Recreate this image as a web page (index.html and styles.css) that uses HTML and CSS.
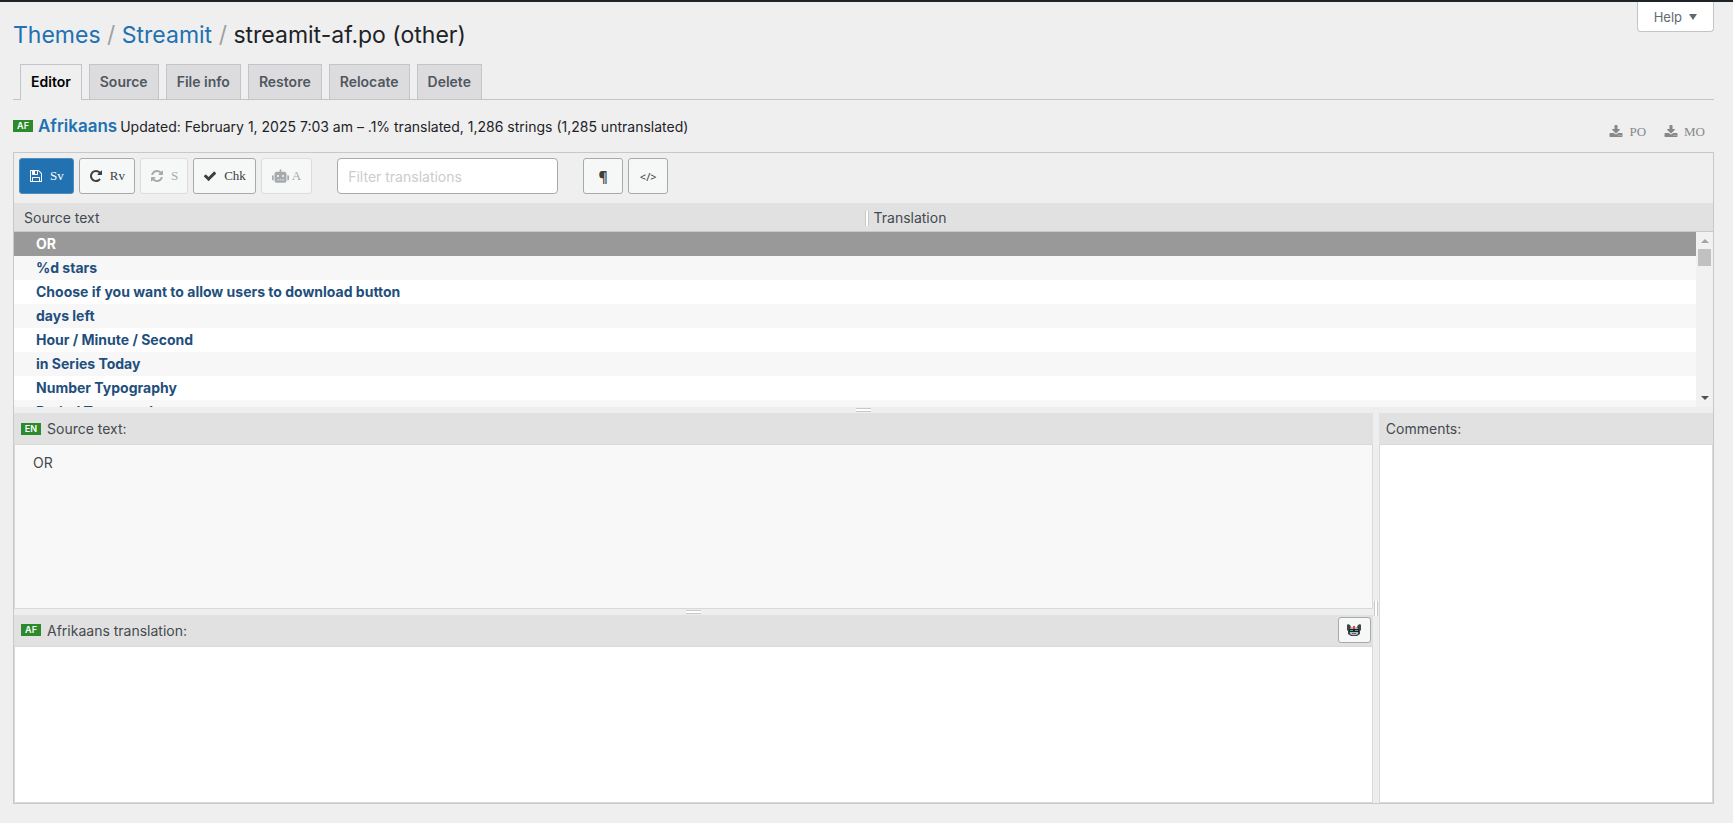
FILE: index.html
```html
<!DOCTYPE html>
<html lang="en">
<head>
  <meta charset="UTF-8" />
  <meta name="viewport" content="width=device-width, initial-scale=1.0"/>
  <title>streamit-af.po - Editor</title>
  <link rel="stylesheet" href="styles.css">
</head>
<body>

  <!-- Header -->
  <header class="page-header">
    <h1 class="breadcrumb">
      <a href="#">Themes</a> <span class="sep">/</span>
      <a href="#">Streamit</a> <span class="sep">/</span>
      streamit-af.po (other)
    </h1>
    <button class="help-btn" type="button">Help <span class="arrow"></span></button>
  </header>

  <nav class="tabs">
    <a class="tab active" href="#">Editor</a>
    <a class="tab" href="#">Source</a>
    <a class="tab" href="#">File info</a>
    <a class="tab" href="#">Restore</a>
    <a class="tab" href="#">Relocate</a>
    <a class="tab" href="#">Delete</a>
  </nav>

  <!-- File status -->
  <div class="status">
    <span class="lang">AF</span>
    <strong class="locale">Afrikaans</strong>
    <span class="updated">Updated: February 1, 2025 7:03 am – .1% translated, 1,286 strings (1,285 untranslated)</span>
    <div class="downloads">
      <a href="#"><svg class="icon" viewBox="0 0 1792 1792"><path d="M1344 1344q0-26-19-45t-45-19-45 19-19 45 19 45 45 19 45-19 19-45zm256 0q0-26-19-45t-45-19-45 19-19 45 19 45 45 19 45-19 19-45zm128-224v320q0 40-28 68t-68 28h-1472q-40 0-68-28t-28-68v-320q0-40 28-68t68-28h465l135 136q58 56 136 56t136-56l136-136h464q40 0 68 28t28 68zm-325-569q17 41-14 70l-448 448q-18 19-45 19t-45-19l-448-448q-31-29-14-70 17-39 59-39h256v-448q0-26 19-45t45-19h256q26 0 45 19t19 45v448h256q42 0 59 39z"/></svg>PO</a>
      <a href="#"><svg class="icon" viewBox="0 0 1792 1792"><path d="M1344 1344q0-26-19-45t-45-19-45 19-19 45 19 45 45 19 45-19 19-45zm256 0q0-26-19-45t-45-19-45 19-19 45 19 45 45 19 45-19 19-45zm128-224v320q0 40-28 68t-68 28h-1472q-40 0-68-28t-28-68v-320q0-40 28-68t68-28h465l135 136q58 56 136 56t136-56l136-136h464q40 0 68 28t28 68zm-325-569q17 41-14 70l-448 448q-18 19-45 19t-45-19l-448-448q-31-29-14-70 17-39 59-39h256v-448q0-26 19-45t45-19h256q26 0 45 19t19 45v448h256q42 0 59 39z"/></svg>MO</a>
    </div>
  </div>

  <!-- Editor -->
  <main class="editor">
    <div class="toolbar">
      <button class="btn btn-primary" type="button"><svg class="icon" viewBox="0 0 1792 1792"><path d="M512 1536h768v-384h-768v384zm896 0h128v-896q0-14-10-38.500t-20-34.500l-281-281q-10-10-34-20t-39-10v416q0 40-28 68t-68 28h-576q-40 0-68-28t-28-68v-416h-128v1280h128v-416q0-40 28-68t68-28h832q40 0 68 28t28 68v416zm-384-928v-320q0-13-9.500-22.500t-22.500-9.500h-192q-13 0-22.500 9.500t-9.500 22.500v320q0 13 9.500 22.500t22.500 9.500h192q13 0 22.500-9.500t9.500-22.500zm640 32v928q0 40-28 68t-68 28h-1344q-40 0-68-28t-28-68v-1344q0-40 28-68t68-28h928q40 0 88 20t76 48l280 280q28 28 48 76t20 88z"/></svg>Sv</button>
      <button class="btn" type="button"><svg class="icon" viewBox="0 0 1792 1792"><path d="M1664 256v448q0 26-19 45t-45 19h-448q-42 0-59-40-17-39 14-69l138-138q-148-137-349-137-104 0-198.500 40.500t-163.500 109.500-109.500 163.500-40.500 198.500 40.500 198.500 109.500 163.500 163.500 109.500 198.500 40.500q119 0 225-52t179-147q7-10 23-12 15 0 25 9l137 138q9 8 9.500 20.500t-7.500 22.500q-109 132-264 204.500t-327 72.500q-156 0-298-61t-245-164-164-245-61-298 61-298 164-245 245-164 298-61q147 0 284.500 55.500t244.500 156.500l130-129q29-31 70-14 39 17 39 59z"/></svg>Rv</button>
      <button class="btn" type="button" disabled><svg class="icon" viewBox="0 0 1792 1792"><path d="M1639 1056q0 5-1 7-64 268-268 434.500t-478 166.500q-146 0-282.500-55t-243.500-157l-129 129q-19 19-45 19t-45-19-19-45v-448q0-26 19-45t45-19h448q26 0 45 19t19 45-19 45l-137 137q71 66 161 102t187 36q134 0 250-65t186-179q11-17 53-117 8-23 30-23h192q13 0 22.500 9.500t9.500 22.500zm25-800v448q0 26-19 45t-45 19h-448q-26 0-45-19t-19-45 19-45l138-138q-148-137-349-137-134 0-250 65t-186 179q-11 17-53 117-8 23-30 23h-199q-13 0-22.500-9.500t-9.500-22.500v-7q65-268 270-434.500t480-166.500q146 0 284 55.500t245 156.500l130-129q19-19 45-19t45 19 19 45z"/></svg>S</button>
      <button class="btn" type="button"><svg class="icon" viewBox="0 0 1792 1792"><path d="M1671 566q0 40-28 68l-724 724-136 136q-28 28-68 28t-68-28l-136-136-362-362q-28-28-28-68t28-68l136-136q28-28 68-28t68 28l294 295 656-657q28-28 68-28t68 28l136 136q28 28 28 68z"/></svg>Chk</button>
      <button class="btn btn-auto" type="button" disabled><svg class="icon icon-robot" viewBox="0 0 640 512"><path d="M32,224H64V416H32A31.960,31.960,0,0,1,0,384V256A31.960,31.960,0,0,1,32,224Zm512-48V448a64.060,64.060,0,0,1-64,64H160a64.060,64.060,0,0,1-64-64V176a79.970,79.970,0,0,1,80-80H288V32a32,32,0,0,1,64,0V96H464A79.970,79.970,0,0,1,544,176ZM264,256a40,40,0,1,0-40,40A40,40,0,0,0,264,256Zm-8,128H192v32h64Zm96,0H288v32h64ZM456,256a40,40,0,1,0-40,40A40,40,0,0,0,456,256Zm-8,128H384v32h64ZM640,256V384a31.960,31.960,0,0,1-32,32H576V224h32A31.960,31.960,0,0,1,640,256Z"/></svg>A</button>
      <input class="filter" type="text" placeholder="Filter translations" aria-label="Filter translations">
      <button class="btn btn-square pilcrow" type="button">¶</button>
      <button class="btn btn-square code" type="button">&lt;/&gt;</button>
    </div>

    <div class="list">
      <table class="strings">
        <thead>
          <tr><th>Source text</th><th class="split-col"><span class="grip grip-v"></span>Translation</th></tr>
        </thead>
        <tbody>
          <tr class="selected"><td>OR</td><td></td></tr>
          <tr><td>%d stars</td><td></td></tr>
          <tr><td>Choose if you want to allow users to download button</td><td></td></tr>
          <tr><td>days left</td><td></td></tr>
          <tr><td>Hour / Minute / Second</td><td></td></tr>
          <tr><td>in Series Today</td><td></td></tr>
          <tr><td>Number Typography</td><td></td></tr>
          <tr><td>Period Typography</td><td></td></tr>
        </tbody>
      </table>
      <div class="scrollbar">
        <span class="scroll-up"></span>
        <span class="scroll-thumb"></span>
        <span class="scroll-down"></span>
      </div>
    </div>

    <div class="splitter"><span class="grip"></span></div>

    <div class="panes">
      <div class="left">
        <section class="pane pane-source">
          <h2 class="pane-title"><span class="lang">EN</span>Source text:</h2>
          <div class="pane-body source">OR</div>
        </section>
        <div class="splitter"><span class="grip"></span></div>
        <section class="pane pane-target">
          <div class="pane-title">
            <span class="lang">AF</span><label for="translation">Afrikaans translation:</label>
            <button class="btn btn-bot" type="button" aria-label="Suggest translations">
              <svg viewBox="0 0 14 14">
                <path fill="#444" d="M1 1l2 1 1 2h6l1-2 2-1 1 1v5l-1 1v3l-3 2H4l-3-2V8L0 7V2z"/>
                <path fill="#b8bcbe" d="M4 4h6l1 2H3zM3 9h8v2l-2 1H5l-2-1z"/>
                <path fill="#222" d="M2 6h10v3H2z"/>
                <path fill="#23b5e8" d="M3 7h3v1H3zM8 7h3v1H8z"/>
                <path fill="#e8452c" d="M6 3h2v3H6z"/>
                <path fill="#666" d="M5 10h4v1H5z"/>
              </svg>
            </button>
          </div>
          <textarea class="pane-body" id="translation"></textarea>
        </section>
      </div>
      <div class="splitter-v"><span class="grip grip-v"></span></div>
      <section class="pane">
        <div class="pane-title"><label for="comments">Comments:</label></div>
        <textarea class="pane-body" id="comments"></textarea>
      </section>
    </div>
  </main>

</body>
</html>
```
FILE: styles.css
```css
* {
  margin: 0;
  padding: 0;
  box-sizing: border-box;
}

body {
  background: #efefef;
  border-top: 2px solid #1d2327;
  color: #1d2327;
  font-family: Inter, sans-serif;
  font-size: 14px;
  height: 100vh;
  min-height: 600px;
  padding: 0 19px 19px 13px;
  display: flex;
  flex-direction: column;
}

a {
  color: #2271b1;
  text-decoration: none;
}

button, input, textarea {
  font-family: inherit;
}

/* Header */
.page-header {
  display: flex;
  justify-content: space-between;
  align-items: flex-start;
}

.breadcrumb {
  font-size: 23px;
  font-weight: 400;
  line-height: 30px;
  padding: 18px 0 14px;
}

.breadcrumb .sep {
  color: #a0a0a0;
}

.help-btn {
  display: flex;
  align-items: center;
  gap: 7px;
  height: 30px;
  padding: 0 16px;
  background: #fff;
  border: 1px solid #c3c4c7;
  border-top: none;
  border-radius: 0 0 4px 4px;
  color: #646970;
  font-size: 13px;
}

.help-btn .arrow {
  border: 4px solid transparent;
  border-top: 6px solid #646970;
  border-bottom: none;
}

/* Tabs */
.tabs {
  display: flex;
  gap: 7px;
  padding-left: 7px;
  border-bottom: 1px solid #c3c4c7;
}

.tab {
  padding: 5px 10px;
  border: 1px solid #c3c4c7;
  border-bottom: none;
  background: #dcdcde;
  color: #50575e;
  font-weight: 600;
  line-height: 24px;
}

.tab.active {
  margin-bottom: -1px;
  padding-bottom: 6px;
  background: #efefef;
  color: #000;
}

/* Status */
.status {
  display: flex;
  align-items: center;
  height: 52px;
}

.lang {
  width: 20px;
  background: #2b8a2b;
  color: #fff;
  font-size: 9px;
  font-weight: 600;
  line-height: 12px;
  text-align: center;
}

.locale {
  margin: 0 3px 0 5px;
  color: #2271b1;
  font-size: 17px;
  font-weight: 600;
}

.downloads {
  display: flex;
  gap: 18px;
  margin-left: auto;
  padding: 12px 9px 0 0;
}

.downloads a {
  display: flex;
  align-items: center;
  gap: 6px;
  color: #888;
  font-family: "Liberation Serif", serif;
  font-size: 13px;
}

.icon {
  width: 14px;
  height: 14px;
  fill: currentColor;
}

/* Editor */
.editor {
  flex: 1;
  min-height: 0;
  display: flex;
  flex-direction: column;
  border: 1px solid #c8c8c8;
}

.toolbar {
  display: flex;
  gap: 5px;
  padding: 5px 5px 9px;
}

.btn {
  display: flex;
  align-items: center;
  justify-content: center;
  gap: 7px;
  height: 36px;
  padding: 0 9px;
  background: #f6f7f7;
  border: 1px solid #a7a9ab;
  border-radius: 3px;
  color: #3c3f42;
  font-family: "Liberation Serif", serif;
  font-size: 13px;
}

.btn:disabled {
  border-color: #dcdcde;
  color: #a7aaad;
}

.btn-primary {
  background: #2271b1;
  border-color: #4b8cc2;
  color: #fff;
}

.btn-auto {
  gap: 3px;
  padding: 0 10px;
}

.icon-robot {
  width: 17px;
}

.btn-square {
  width: 40px;
  padding: 0;
}

.pilcrow {
  font-family: "Open Sans", sans-serif;
  font-size: 14px;
  font-weight: 700;
}

.code {
  font-family: "Noto Sans", sans-serif;
  font-size: 11px;
}

.filter {
  width: 221px;
  margin: 0 20px;
  padding: 0 10px;
  background: #fff;
  border: 1px solid #a7a9ab;
  border-radius: 4px;
  font-size: 14px;
}

.filter::placeholder {
  color: #ccc;
}

/* String list */
.list {
  flex: 204 1 0;
  min-height: 0;
  overflow: hidden;
  position: relative;
  background: #fff;
}

.strings {
  width: 100%;
  table-layout: fixed;
  border-collapse: separate;
  border-spacing: 0;
}

.strings th {
  height: 29px;
  padding: 0 10px;
  background: #e1e1e1;
  border-bottom: 1px solid #c8c8c8;
  color: #444a50;
  font-weight: 400;
  text-align: left;
}

.strings .split-col {
  padding-left: 1px;
}

.strings td {
  height: 24px;
  padding: 0 22px 2px;
  color: #1f4f7d;
  font-weight: 700;
}

.strings tbody tr:nth-child(even) {
  background: #f7f7f7;
}

.strings .selected td {
  background: #999;
  color: #fff;
}

.scrollbar {
  position: absolute;
  top: 29px;
  right: 0;
  bottom: 0;
  width: 17px;
  padding: 7px 0;
  display: flex;
  flex-direction: column;
  align-items: center;
  background: #f1f1f1;
}

.scroll-up, .scroll-down {
  border: 4px solid transparent;
}

.scroll-up {
  border-top: none;
  border-bottom-color: #a3a3a3;
}

.scroll-down {
  margin-top: auto;
  border-bottom: none;
  border-top-color: #505050;
}

.scroll-thumb {
  width: 13px;
  height: 17px;
  margin-top: 6px;
  background: #c1c1c1;
}

/* Splitters */
.splitter, .splitter-v {
  display: flex;
  align-items: center;
  justify-content: center;
  background: #eee;
}

.splitter {
  flex: 0 0 6px;
}

.grip {
  width: 15px;
  height: 4px;
  border-top: 1px solid #c8c8c8;
  border-bottom: 1px solid #c8c8c8;
  background: #fff;
}

.grip-v {
  width: 4px;
  height: 15px;
  border: solid #c8c8c8;
  border-width: 0 1px;
}

.strings .grip-v {
  display: inline-block;
  margin-right: 5px;
  vertical-align: text-bottom;
}

/* Panes */
.panes {
  flex: 389 1 0;
  min-height: 0;
  display: grid;
  grid-template-columns: 61fr 6px 15fr;
}

.left, .pane {
  min-width: 0;
  min-height: 0;
  display: flex;
  flex-direction: column;
}

.pane-source {
  flex: 195 1 0;
}

.pane-target {
  flex: 188 1 0;
}

.pane-title {
  display: flex;
  align-items: center;
  flex: 0 0 31px;
  padding: 0 2px 0 7px;
  background: #e1e1e1;
  color: #444a50;
  font-size: 14px;
  font-weight: 400;
}

.pane-title .lang {
  margin-right: 6px;
}

.pane-body {
  flex: 1;
  min-height: 0;
  width: 100%;
  padding: 9px 18px;
  background: #fff;
  border: 1px solid #d9d9d9;
  color: #444a50;
  font-size: 14px;
  resize: none;
}

.source {
  background: #f8f8f8;
}

.btn-bot {
  width: 33px;
  height: 26px;
  margin-left: auto;
  padding: 0;
}

.btn-bot svg {
  width: 14px;
  height: 14px;
}
```
